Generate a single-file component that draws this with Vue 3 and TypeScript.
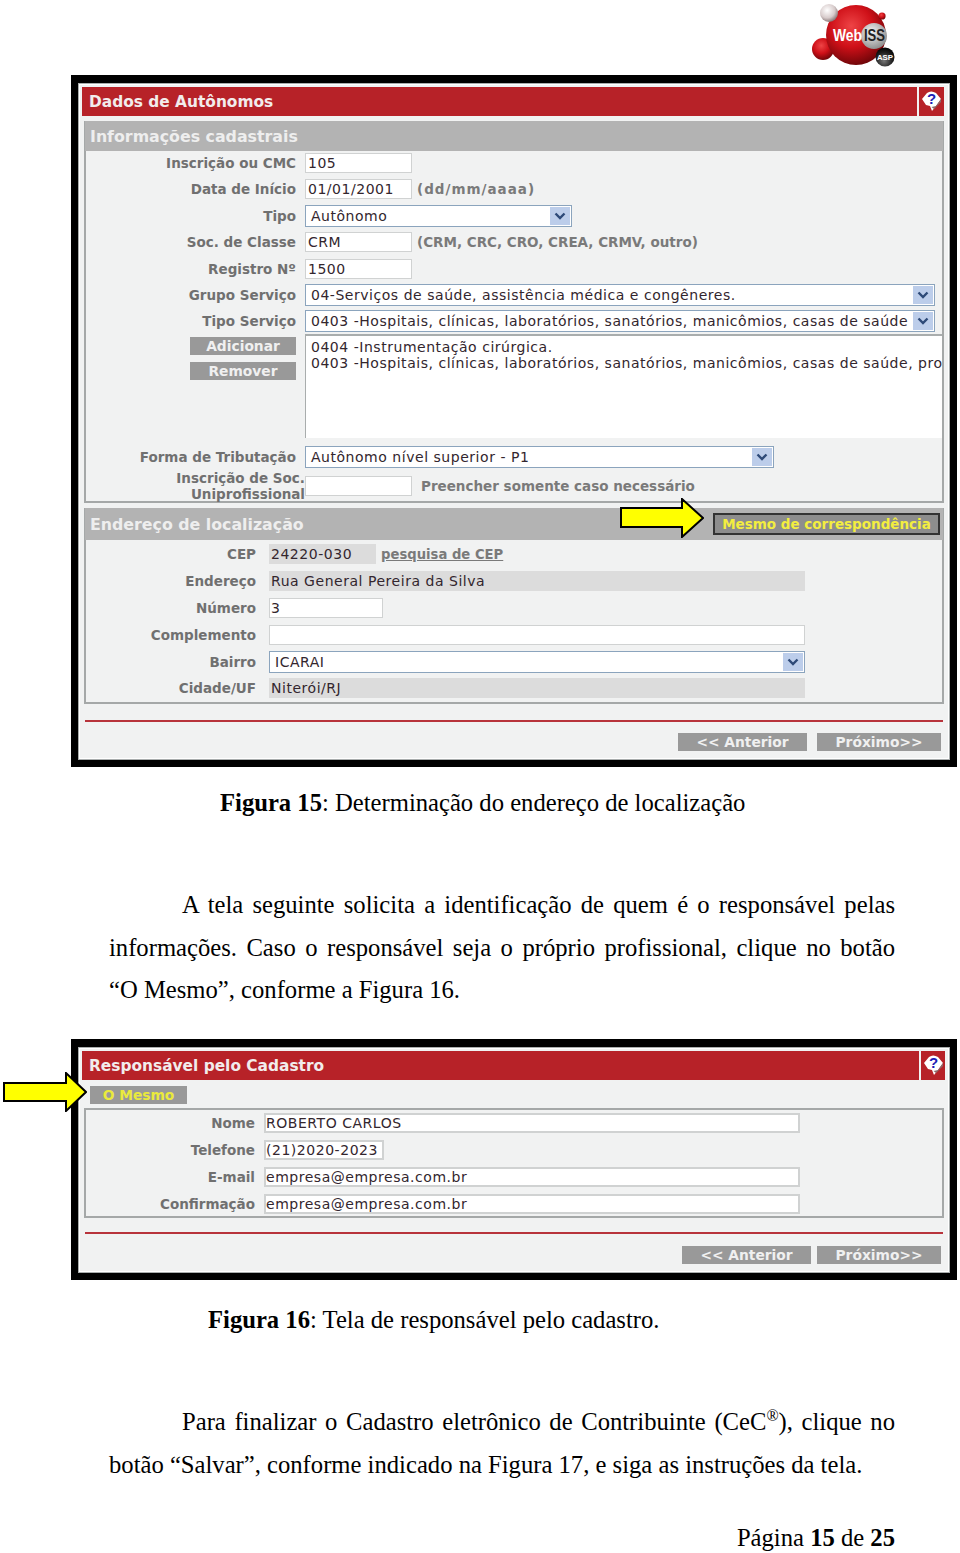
<script setup lang="ts">
const contactRows = [
  { label: 'Nome', value: 'ROBERTO CARLOS', size: 'wide' },
  { label: 'Telefone', value: '(21)2020-2023', size: 'short' },
  { label: 'E-mail', value: 'empresa@empresa.com.br', size: 'wide' },
  { label: 'Confirmação', value: 'empresa@empresa.com.br', size: 'wide' }
]
</script>

<template>
  <div class="page">
    <header class="logo-bar">
      <svg class="logo" width="90" height="68" viewBox="0 0 90 68">
        <defs>
          <radialGradient id="rd" cx="0.42" cy="0.35" r="0.7">
            <stop offset="0" stop-color="#ee4446" />
            <stop offset="0.5" stop-color="#cf1018" />
            <stop offset="1" stop-color="#640407" />
          </radialGradient>
          <radialGradient id="wh" cx="0.4" cy="0.35" r="0.7">
            <stop offset="0" stop-color="#ffffff" />
            <stop offset="0.6" stop-color="#d8cccc" />
            <stop offset="1" stop-color="#7c6a6a" />
          </radialGradient>
          <radialGradient id="gr" cx="0.4" cy="0.35" r="0.7">
            <stop offset="0" stop-color="#f5f5f5" />
            <stop offset="1" stop-color="#8a8a8a" />
          </radialGradient>
          <radialGradient id="bk" cx="0.45" cy="0.7" r="0.7">
            <stop offset="0" stop-color="#777" />
            <stop offset="0.6" stop-color="#222" />
            <stop offset="1" stop-color="#000" />
          </radialGradient>
        </defs>
        <circle cx="14" cy="49" r="11" fill="url(#rd)" />
        <circle cx="47" cy="35" r="30" fill="url(#rd)" />
        <circle cx="20" cy="13" r="9" fill="url(#wh)" />
        <circle cx="73" cy="16" r="3.6" fill="url(#rd)" />
        <circle cx="65" cy="36" r="13" fill="url(#gr)" />
        <circle cx="76" cy="57" r="9.5" fill="url(#bk)" />
        <text x="24" y="41" class="logo-web" textLength="29" lengthAdjust="spacingAndGlyphs">Web</text>
        <text x="55" y="41" class="logo-iss" textLength="21" lengthAdjust="spacingAndGlyphs">ISS</text>
        <text x="68" y="60" class="logo-asp" textLength="16" lengthAdjust="spacingAndGlyphs">ASP</text>
      </svg>
    </header>

    <section class="win win-one">
      <div class="win-in">
        <div class="head">
          <h2>Dados de Autônomos</h2>
          <div class="help">
            <svg width="25" height="29" viewBox="0 0 25 29">
              <path d="M3 12 L8 6 Q12 3 17 6 L22 12 L17 19 L13 24 L11 19 L7 18 Z" fill="#fff" />
              <path d="M12.5 20 L17 19 L22 12 L22 15 L15 22 Z" fill="#8b6a6a" />
              <text x="12.5" y="17" class="help-q">?</text>
            </svg>
          </div>
        </div>

        <div class="panel">
          <h3 class="bar">Informações cadastrais</h3>
          <div class="form form-main">
            <div class="row">
              <label>Inscrição ou CMC</label>
              <span class="input w106">105</span>
            </div>
            <div class="row">
              <label>Data de Início</label>
              <span class="input w106">01/01/2001</span>
              <span class="note note-date">(dd/mm/aaaa)</span>
            </div>
            <div class="row">
              <label>Tipo</label>
              <span class="select w267">Autônomo<i class="arrow"><svg width="12" height="8" viewBox="0 0 12 8"><path d="M1.5 1.5 L6 6 L10.500 1.5" /></svg></i></span>
            </div>
            <div class="row">
              <label>Soc. de Classe</label>
              <span class="input w106">CRM</span>
              <span class="note">(CRM, CRC, CRO, CREA, CRMV, outro)</span>
            </div>
            <div class="row">
              <label>Registro Nº</label>
              <span class="input w106">1500</span>
            </div>
            <div class="row">
              <label>Grupo Serviço</label>
              <span class="select w630">04-Serviços de saúde, assistência médica e congêneres.<i class="arrow"><svg width="12" height="8" viewBox="0 0 12 8"><path d="M1.5 1.5 L6 6 L10.500 1.5" /></svg></i></span>
            </div>
            <div class="row">
              <label>Tipo Serviço</label>
              <span class="select w630">0403 -Hospitais, clínicas, laboratórios, sanatórios, manicômios, casas de saúde<i class="arrow"><svg width="12" height="8" viewBox="0 0 12 8"><path d="M1.5 1.5 L6 6 L10.500 1.5" /></svg></i></span>
            </div>
            <div class="pick">
              <div class="pick-btns">
                <button class="btn">Adicionar</button>
                <button class="btn">Remover</button>
              </div>
              <div class="list">
                <div>0404 -Instrumentação cirúrgica.</div>
                <div>0403 -Hospitais, clínicas, laboratórios, sanatórios, manicômios, casas de saúde, procedimentos</div>
              </div>
            </div>
            <div class="row">
              <label>Forma de Tributação</label>
              <span class="select w469">Autônomo nível superior - P1<i class="arrow"><svg width="12" height="8" viewBox="0 0 12 8"><path d="M1.5 1.5 L6 6 L10.500 1.5" /></svg></i></span>
            </div>
            <div class="row row-tall">
              <label class="two">Inscrição de Soc.<br />Uniprofissional</label>
              <span class="input w106"></span>
              <span class="note">Preencher somente caso necessário</span>
            </div>
          </div>
        </div>

        <div class="panel panel-addr">
          <h3 class="bar">Endereço de localização</h3>
          <div class="form form-addr">
            <div class="row">
              <label>CEP</label>
              <span class="input off w106">24220-030</span>
              <a class="link">pesquisa de CEP</a>
            </div>
            <div class="row">
              <label>Endereço</label>
              <span class="input off w536">Rua General Pereira da Silva</span>
            </div>
            <div class="row">
              <label>Número</label>
              <span class="input w113">3</span>
            </div>
            <div class="row">
              <label>Complemento</label>
              <span class="input w536"></span>
            </div>
            <div class="row">
              <label>Bairro</label>
              <span class="select w536">ICARAI<i class="arrow"><svg width="12" height="8" viewBox="0 0 12 8"><path d="M1.5 1.5 L6 6 L10.500 1.5" /></svg></i></span>
            </div>
            <div class="row">
              <label>Cidade/UF</label>
              <span class="input off w536">Niterói/RJ</span>
            </div>
          </div>
        </div>

        <hr class="rule rule-one" />
        <div class="nav">
          <button class="btn nav-prev">&lt;&lt; Anterior</button>
          <button class="btn nav-next">Próximo&gt;&gt;</button>
        </div>
      </div>
      <svg class="arrow-callout callout-one" width="84" height="40" viewBox="0 0 84 40">
        <path d="M1 10 H62 V1 L83 20 L62 39 V29 H1 Z" />
      </svg>
      <button class="same">Mesmo de correspondência</button>
    </section>

    <p class="caption caption-one"><b>Figura 15</b>: Determinação do endereço de localização</p>

    <div class="text text-one">
      <p class="first">A tela seguinte solicita a identificação de quem é o responsável pelas informações. Caso o responsável seja o próprio profissional, clique no botão “O Mesmo”, conforme a Figura 16.</p>
    </div>

    <section class="win win-two">
      <div class="win-in">
        <div class="head">
          <h2>Responsável pelo Cadastro</h2>
          <div class="help">
            <svg width="25" height="29" viewBox="0 0 25 29">
              <path d="M3 12 L8 6 Q12 3 17 6 L22 12 L17 19 L13 24 L11 19 L7 18 Z" fill="#fff" />
              <path d="M12.5 20 L17 19 L22 12 L22 15 L15 22 Z" fill="#8b6a6a" />
              <text x="12.5" y="17" class="help-q">?</text>
            </svg>
          </div>
        </div>
        <button class="btn btn-same">O Mesmo</button>
        <div class="form form-contact">
          <div v-for="row in contactRows" :key="row.label" class="row">
            <label>{{ row.label }}</label>
            <span class="input" :class="row.size === 'wide' ? 'w536' : 'w120'">{{ row.value }}</span>
          </div>
        </div>
        <hr class="rule rule-two" />
        <div class="nav">
          <button class="btn nav-prev">&lt;&lt; Anterior</button>
          <button class="btn nav-next">Próximo&gt;&gt;</button>
        </div>
      </div>
      <svg class="arrow-callout callout-two" width="84" height="40" viewBox="0 0 84 40">
        <path d="M1 11 H63 V1 L83 20 L63 39 V29 H1 Z" />
      </svg>
    </section>

    <p class="caption caption-two"><b>Figura 16</b>: Tela de responsável pelo cadastro.</p>

    <div class="text text-two">
      <p class="first">Para finalizar o Cadastro eletrônico de Contribuinte (CeC<sup>®</sup>), clique no botão “Salvar”, conforme indicado na Figura 17, e siga as instruções da tela.</p>
    </div>

    <footer class="foot">Página <b>15</b> de <b>25</b></footer>
  </div>
</template>

<style>
html,
body {
  margin: 0;
  background: #fff;
}
</style>

<style scoped>
.page {
  width: 960px;
  height: 1553px;
  overflow: hidden;
  font-family: 'Liberation Serif', 'Times New Roman', serif;
  color: #000;
  background: #fff;
}
.logo-bar {
  height: 75px;
  display: flex;
  justify-content: flex-end;
  padding-right: 61px;
  box-sizing: border-box;
}
.logo-web,
.logo-iss {
  font: bold 16px 'Liberation Sans', sans-serif;
  fill: #fff;
}
.logo-iss {
  fill: #222;
}
.logo-asp {
  font: bold 8px 'Liberation Sans', sans-serif;
  fill: #fff;
}

.win {
  position: relative;
  margin-left: 71px;
  width: 886px;
  box-sizing: border-box;
  border: solid #000;
  border-width: 8px 7px 7px 7px;
  font-family: 'DejaVu Sans', Verdana, sans-serif;
}
.win-one {
  height: 692px;
}
.win-two {
  height: 241px;
  margin-top: 27.500px;
}
.win-in {
  height: 100%;
  box-sizing: border-box;
  padding: 3px 3px 0 3px;
  background: #f1f2f2;
  border: 1px solid #a9adad;
  box-shadow: inset 0 0 0 1px #fff;
}
.head {
  display: flex;
  gap: 2px;
  height: 29px;
}
.head h2 {
  flex: 1;
  margin: 0;
  padding-left: 7px;
  background: #b72228;
  color: #f2ecec;
  font-size: 15.400px;
  line-height: 30px;
  font-weight: bold;
}
.help {
  width: 25px;
  background: #b72228;
  margin-right: 2px;
}
.win-two .help {
  width: 24px;
  margin-right: 1px;
}
.help-q {
  font: bold 15px 'Liberation Sans', sans-serif;
  fill: #1d1db5;
  text-anchor: middle;
}
.panel {
  margin: 5px 2px 0 2px;
  border: 2px solid #a5a8a8;
  border-top: 0;
}
.bar {
  margin: 0;
  background: #b3b3b3;
  color: #eeeeee;
  font-size: 15.800px;
  font-weight: bold;
  padding-left: 5px;
}
.panel .bar {
  margin: 0 -1px;
  height: 30px;
  line-height: 31px;
}
.panel-addr .bar {
  height: 32px;
  line-height: 33px;
}
.form {
  display: flex;
  flex-direction: column;
}
.form-main {
  gap: 4.400px;
  padding: 1px 0 2px;
}
.form-addr {
  gap: 4.900px;
  padding-top: 3.500px;
  padding-bottom: 2.500px;
}
.row {
  display: flex;
  align-items: center;
  height: 22px;
}
.row label {
  flex: none;
  width: 210px;
  margin-right: 9px;
  text-align: right;
  color: #707070;
  font-size: 13.500px;
  font-weight: bold;
  white-space: nowrap;
}
.row label.two {
  line-height: 16px;
  margin-right: 0;
  width: 219px;
}
.row-tall {
  height: 26px;
}
.form-addr .row label {
  width: 170px;
  margin-right: 13px;
}
.form-contact .row label {
  width: 169px;
  margin-right: 9px;
}
.input,
.select {
  position: relative;
  flex: none;
  display: block;
  box-sizing: border-box;
  height: 20px;
  padding: 0 2px;
  border: 1px solid #d0d2d2;
  background: #fff;
  color: #33262e;
  font-size: 14px;
  letter-spacing: 0.530px;
  line-height: 19px;
  white-space: nowrap;
  overflow: hidden;
}
.form-addr .input {
  padding-left: 1px;
}
.select {
  height: 22px;
  padding-left: 5px;
  border-color: #8ba4bd;
  line-height: 21px;
}
.off {
  background: #dcdcdc;
  border-color: #dcdcdc;
}
.w106 { width: 107px; }
.w113 { width: 114px; }
.w120 { width: 120px; }
.w267 { width: 267px; }
.w469 { width: 469px; }
.w536 { width: 536px; }
.w630 { width: 630px; }
.arrow {
  position: absolute;
  top: 1px;
  right: 1px;
  width: 20px;
  height: 18px;
  display: flex;
  align-items: center;
  justify-content: center;
  background: #bccdea;
}
.arrow path {
  fill: none;
  stroke: #2e4a78;
  stroke-width: 2.400;
}
.note {
  margin-left: 5px;
  color: #7a7a7a;
  font-size: 13.500px;
  font-weight: bold;
  white-space: nowrap;
}
.note-date {
  letter-spacing: 1px;
}
.row-tall .note {
  margin-left: 9px;
}
.link {
  margin-left: 5px;
  color: #7a7a7a;
  font-size: 13.200px;
  font-weight: bold;
  text-decoration: underline;
}
.pick {
  display: flex;
  height: 104px;
  margin-top: -3px;
  margin-bottom: 4px;
}
.pick-btns {
  flex: none;
  width: 219px;
  padding: 3px 0 0 104px;
  box-sizing: border-box;
  display: flex;
  flex-direction: column;
  gap: 7px;
}
.btn {
  display: block;
  border: 0;
  padding: 0;
  background: #999;
  color: #f0f0f0;
  font-family: inherit;
  font-size: 13.800px;
  font-weight: bold;
  line-height: 18px;
  height: 18px;
}
.pick .btn {
  width: 106px;
}
.list {
  flex: 1;
  overflow: hidden;
  background: #fff;
  border-top: 2px solid #a9adad;
  border-left: 1px solid #a9adad;
  padding: 3px 0 0 5px;
  color: #33262e;
  font-size: 14px;
  letter-spacing: 0.530px;
  line-height: 16px;
  white-space: nowrap;
}
.rule {
  height: 2px;
  border: 0;
  background: #b8343c;
  margin: 0 3px;
}
.rule-one {
  margin-top: 16px;
}
.rule-two {
  margin-top: 14px;
}
.nav {
  display: flex;
  justify-content: flex-end;
  gap: 10px;
  margin: 11px 5px 0 0;
}
.nav .btn {
  height: 18px;
}
.nav-prev {
  width: 129px;
}
.nav-next {
  width: 124px;
}
.win-two .nav {
  gap: 6px;
  margin-top: 12px;
  margin-right: 5px;
}
.arrow-callout {
  position: absolute;
}
.arrow-callout path {
  fill: #ffff00;
  stroke: #000;
  stroke-width: 2;
}
.callout-one {
  left: 542px;
  top: 415px;
}
.callout-two {
  left: -75px;
  top: 25px;
}
.same {
  position: absolute;
  left: 635px;
  top: 430px;
  width: 227px;
  height: 22px;
  padding: 0;
  box-sizing: border-box;
  border: 2px solid #333;
  background: #8d8d8d;
  color: #f3ee3f;
  font-family: inherit;
  font-size: 13.500px;
  font-weight: bold;
}
.btn-same {
  width: 97px;
  margin: 6px 0 4px 8px;
  color: #eaea3c;
}
.form-contact {
  margin: 0 2px;
  border: 2px solid #a5a8a8;
  padding: 2px 0 1px;
  gap: 5px;
}
.form-contact .input {
  border-width: 2px;
  line-height: 16px;
  padding-left: 0;
}

.caption {
  margin: 0;
  font-size: 24.650px;
  line-height: 28px;
  white-space: nowrap;
}
.caption-one {
  margin-top: 22px;
  padding-left: 220px;
}
.caption-two {
  margin-top: 26px;
  padding-left: 208px;
}
.text {
  width: 786px;
  margin-left: 109px;
  font-size: 24.650px;
  line-height: 42.500px;
}
.text p {
  margin: 0;
  text-align: justify;
}
.first {
  text-indent: 73px;
}
.text-one,
.text-two {
  margin-top: 67px;
}
.text sup {
  font-size: 16px;
  line-height: 0;
}
.foot {
  margin-top: 38px;
  width: 895px;
  text-align: right;
  font-size: 24.650px;
  line-height: 28px;
}
</style>
